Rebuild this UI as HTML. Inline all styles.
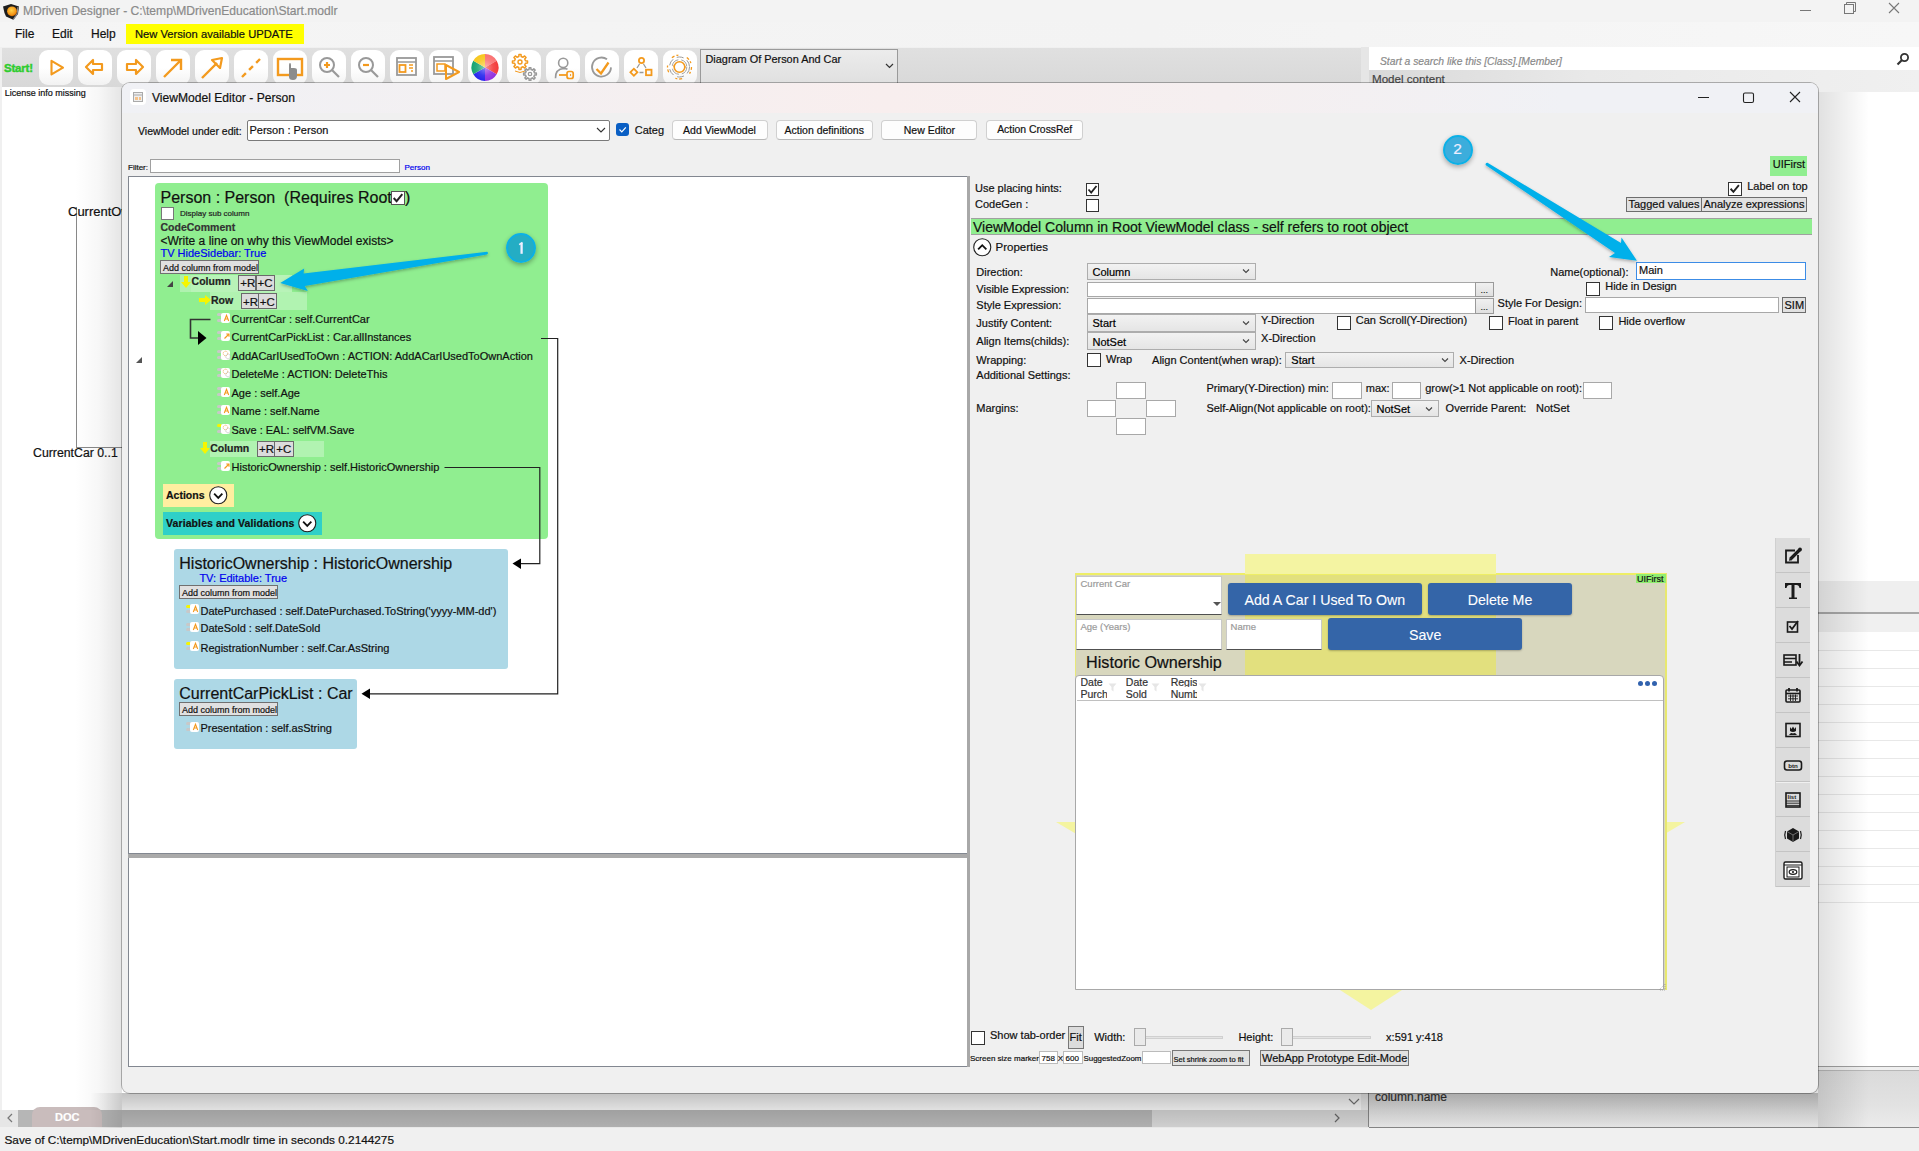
<!DOCTYPE html>
<html><head><meta charset="utf-8"><title>MDriven Designer</title>
<style>
html,body{margin:0;padding:0;}
body{width:1919px;height:1151px;position:relative;overflow:hidden;background:#f0f0f0;font-family:"Liberation Sans",sans-serif;}
.t{position:absolute;white-space:nowrap;line-height:1;font-family:"Liberation Sans",sans-serif;-webkit-text-stroke:0.2px currentColor;}
.r{position:absolute;}
svg.r{overflow:visible;}
</style></head><body>
<div class="r" style="left:0.0px;top:0.0px;width:1919.0px;height:22.0px;background:#f3f3f3;"></div>
<div class="r" style="left:0.0px;top:22.0px;width:1919.0px;height:25.0px;background:linear-gradient(90deg,#f5f5f5,#f3f3f3 60%,#f7f7f7);"></div>
<div class="r" style="left:2.0px;top:48.0px;width:1359.0px;height:39.0px;background:linear-gradient(#e0e0e0,#d8d8d8);"></div>
<div class="r" style="left:1361.0px;top:47.0px;width:8.0px;height:45.0px;background:#e6e6e6;"></div>
<div class="r" style="left:2.0px;top:87.0px;width:1359.0px;height:1023.0px;background:#fff;"></div>
<div class="r" style="left:1369.0px;top:70.0px;width:550.0px;height:22.0px;background:linear-gradient(90deg,#d9d9d9,#e9e9e9 40%,#f0f0f0);"></div>
<div class="r" style="left:1369.0px;top:92.0px;width:550.0px;height:974.0px;background:#fff;"></div>
<div class="r" style="left:1369.0px;top:47.0px;width:550.0px;height:23.0px;background:#fff;"></div>
<div class="t" style="left:1380.0px;top:56.7px;font-size:10.3px;color:#8a8a8a;font-style:italic;">Start a search like this [Class].[Member]</div>
<svg class="r" style="left:1896px;top:52px" width="14" height="14" viewBox="0 0 14 14"><circle cx="8.5" cy="5.5" r="3.6" fill="none" stroke="#333" stroke-width="1.8"/><path d="M6 8 L1.5 12.5" stroke="#333" stroke-width="2.2"/></svg>
<div class="t" style="left:1372.0px;top:73.4px;font-size:11.6px;color:#444;">Model content</div>
<div class="r" style="left:1818.0px;top:581.0px;width:101.0px;height:32.0px;background:#efefef;"></div>
<div class="r" style="left:1818.0px;top:612.0px;width:101.0px;height:2.0px;background:#a8a8a8;"></div>
<div class="r" style="left:1818.0px;top:614.0px;width:101.0px;height:18.0px;background:#f0f0f0;"></div>
<div class="r" style="left:1818.0px;top:650.0px;width:101.0px;height:1.0px;background:#e8e8e8;"></div>
<div class="r" style="left:1818.0px;top:668.0px;width:101.0px;height:1.0px;background:#e8e8e8;"></div>
<div class="r" style="left:1818.0px;top:686.0px;width:101.0px;height:1.0px;background:#e8e8e8;"></div>
<div class="r" style="left:1818.0px;top:704.0px;width:101.0px;height:1.0px;background:#e8e8e8;"></div>
<div class="r" style="left:1818.0px;top:722.0px;width:101.0px;height:1.0px;background:#e8e8e8;"></div>
<div class="r" style="left:1818.0px;top:740.0px;width:101.0px;height:1.0px;background:#e8e8e8;"></div>
<div class="r" style="left:1818.0px;top:758.0px;width:101.0px;height:1.0px;background:#e8e8e8;"></div>
<div class="r" style="left:1818.0px;top:776.0px;width:101.0px;height:1.0px;background:#e8e8e8;"></div>
<div class="r" style="left:1818.0px;top:794.0px;width:101.0px;height:1.0px;background:#e8e8e8;"></div>
<div class="r" style="left:1818.0px;top:812.0px;width:101.0px;height:1.0px;background:#e8e8e8;"></div>
<div class="r" style="left:1818.0px;top:830.0px;width:101.0px;height:1.0px;background:#e8e8e8;"></div>
<div class="r" style="left:1818.0px;top:848.0px;width:101.0px;height:1.0px;background:#e8e8e8;"></div>
<div class="r" style="left:1818.0px;top:866.0px;width:101.0px;height:1.0px;background:#e8e8e8;"></div>
<div class="r" style="left:1818.0px;top:884.0px;width:101.0px;height:1.0px;background:#e8e8e8;"></div>
<div class="r" style="left:1818.0px;top:902.0px;width:101.0px;height:1.0px;background:#e8e8e8;"></div>
<div class="r" style="left:1369.0px;top:1066.0px;width:550.0px;height:1.0px;background:#a0a0a0;"></div>
<div class="r" style="left:1369.0px;top:1070.0px;width:550.0px;height:1.0px;background:#b8b8b8;"></div>
<div class="r" style="left:1369.0px;top:1071.0px;width:550.0px;height:57.0px;background:linear-gradient(#dadada,#e2e2e2 60%,#ececec);"></div>
<div class="r" style="left:1368.0px;top:1071.0px;width:1.0px;height:57.0px;background:#888;"></div>
<div class="r" style="left:1369.0px;top:1127.0px;width:550.0px;height:1.0px;background:#888;"></div>
<div class="t" style="left:1375.0px;top:1091.4px;font-size:12px;color:#333;">column.name</div>
<div class="r" style="left:0.0px;top:1110.0px;width:1368.0px;height:17.0px;background:#d6d6d6;"></div>
<div class="r" style="left:0.0px;top:1110.0px;width:18.0px;height:17.0px;background:#e6e6e6;"></div>
<div class="r" style="left:18.0px;top:1110.0px;width:1134.0px;height:17.0px;background:#b6b6b6;"></div>
<svg class="r" style="left:6px;top:1113px" width="8" height="10"><path d="M6 1 L2 5 L6 9" fill="none" stroke="#777" stroke-width="1.2"/></svg>
<svg class="r" style="left:1333px;top:1113px" width="8" height="10"><path d="M2 1 L6 5 L2 9" fill="none" stroke="#666" stroke-width="1.2"/></svg>
<svg class="r" style="left:1348px;top:1098px" width="12" height="8"><path d="M1 1 L6 6 L11 1" fill="none" stroke="#777" stroke-width="1.2"/></svg>
<div class="r" style="left:32.0px;top:1107.0px;width:70.0px;height:20.0px;background:#c9bcbc;border-radius:8px 8px 0 0;"></div>
<div class="t" style="left:55.0px;top:1112.3px;font-size:11px;color:#fff;font-weight:bold;">DOC</div>
<div class="r" style="left:0.0px;top:1127.0px;width:1369.0px;height:24.0px;background:#f0f0f0;"></div>
<div class="r" style="left:1369.0px;top:1128.0px;width:550.0px;height:23.0px;background:#f0f0f0;"></div>
<div class="t" style="left:4.5px;top:1135.1px;font-size:11.8px;color:#111;">Save of C:\temp\MDrivenEducation\Start.modlr time in seconds 0.2144275</div>
<svg class="r" style="left:2px;top:2px" width="18" height="18" viewBox="0 0 18 18"><path d="M1 4.5 L9 2 L17 4.5 L16 12 L11.3 17.8 L4 14.5 L2.5 11 Z" fill="#1e1e1e"/><path d="M16 5 L15 12 L11.3 17.5" fill="none" stroke="#8a8a90" stroke-width="1.2"/><circle cx="10" cy="9.3" r="4.9" fill="url(#gball)"/><defs><radialGradient id="gball" cx="0.45" cy="0.4" r="0.6"><stop offset="0" stop-color="#ffd24a"/><stop offset="0.7" stop-color="#f59a1a"/><stop offset="1" stop-color="#d46a00"/></radialGradient></defs></svg>
<div class="t" style="left:23.0px;top:5.0px;font-size:12.1px;color:#8a8a8a;">MDriven Designer - C:\temp\MDrivenEducation\Start.modlr</div>
<svg class="r" style="left:1798px;top:1px" width="110" height="14"><path d="M2 9.5 H13" stroke="#777" stroke-width="1"/><rect x="46.5" y="3.5" width="9" height="9" fill="none" stroke="#777"/><path d="M48.5 3.5 V1.5 H57.5 V10.5 H55.5" fill="none" stroke="#777"/><path d="M91 2 L101 12 M101 2 L91 12" stroke="#777" stroke-width="1.1"/></svg>
<div class="t" style="left:15.0px;top:28.4px;font-size:12px;color:#111;">File</div>
<div class="t" style="left:52.0px;top:28.4px;font-size:12px;color:#111;">Edit</div>
<div class="t" style="left:91.0px;top:28.4px;font-size:12px;color:#111;">Help</div>
<div class="r" style="left:126.0px;top:24.0px;width:178.0px;height:20.0px;background:#ffff00;"></div>
<div class="t" style="left:135.0px;top:29.1px;font-size:11.2px;color:#111;">New Version available UPDATE</div>
<div class="t" style="left:4.0px;top:63.4px;font-size:11.5px;color:#2ecc2e;font-weight:bold;letter-spacing:-0.2px;-webkit-text-stroke:0.4px #2ecc2e;">Start!</div>
<div class="r" style="left:39.0px;top:50.0px;width:34.0px;height:35.0px;background:linear-gradient(#fff 50%,#f2f2f2);border-radius:9px;"></div>
<svg class="r" style="left:39px;top:50px" width="34" height="35" viewBox="0 0 34 35"><path d="M12.5 10.8 L24 17.6 L12.5 24.4 Z" fill="none" stroke="#f39a1e" stroke-width="2.1" stroke-linejoin="round"/></svg>
<div class="r" style="left:78.0px;top:50.0px;width:34.0px;height:35.0px;background:linear-gradient(#fff 50%,#f2f2f2);border-radius:9px;"></div>
<svg class="r" style="left:78px;top:50px" width="34" height="35" viewBox="0 0 34 35"><path d="M8 17 L15 10 V14 H24 V20 H15 V24 Z" fill="none" stroke="#f39a1e" stroke-width="2.2" stroke-linejoin="round"/></svg>
<div class="r" style="left:117.0px;top:50.0px;width:34.0px;height:35.0px;background:linear-gradient(#fff 50%,#f2f2f2);border-radius:9px;"></div>
<svg class="r" style="left:117px;top:50px" width="34" height="35" viewBox="0 0 34 35"><path d="M26 17 L19 10 V14 H10 V20 H19 V24 Z" fill="none" stroke="#f39a1e" stroke-width="2.2" stroke-linejoin="round"/></svg>
<div class="r" style="left:156.0px;top:50.0px;width:34.0px;height:35.0px;background:linear-gradient(#fff 50%,#f2f2f2);border-radius:9px;"></div>
<svg class="r" style="left:156px;top:50px" width="34" height="35" viewBox="0 0 34 35"><path d="M8 27 L24 11 M15 10 H25 V20" fill="none" stroke="#f39a1e" stroke-width="2.4"/></svg>
<div class="r" style="left:195.0px;top:50.0px;width:34.0px;height:35.0px;background:linear-gradient(#fff 50%,#f2f2f2);border-radius:9px;"></div>
<svg class="r" style="left:195px;top:50px" width="34" height="35" viewBox="0 0 34 35"><path d="M7 28 L22 13" stroke="#f39a1e" stroke-width="2.4"/><path d="M17 10 L27 8 L25 18 Z" fill="none" stroke="#f39a1e" stroke-width="2.2" stroke-linejoin="round"/></svg>
<div class="r" style="left:234.0px;top:50.0px;width:34.0px;height:35.0px;background:linear-gradient(#fff 50%,#f2f2f2);border-radius:9px;"></div>
<svg class="r" style="left:234px;top:50px" width="34" height="35" viewBox="0 0 34 35"><path d="M8 27 L26 9" stroke="#f39a1e" stroke-width="2.4" stroke-dasharray="5.5 4.5"/></svg>
<div class="r" style="left:273.0px;top:50.0px;width:34.0px;height:35.0px;background:linear-gradient(#fff 50%,#f2f2f2);border-radius:9px;"></div>
<svg class="r" style="left:273px;top:50px" width="34" height="35" viewBox="0 0 34 35"><rect x="5" y="9" width="24" height="16" fill="none" stroke="#f39a1e" stroke-width="2.4"/><path d="M16 15 V27 Q16 30 20 30 Q24 30 24 26 V20 Q24 18 21 18 H18 V15 Q18 13 17 13 Q16 13 16 15Z" fill="#8d8d8d"/></svg>
<div class="r" style="left:312.0px;top:50.0px;width:34.0px;height:35.0px;background:linear-gradient(#fff 50%,#f2f2f2);border-radius:9px;"></div>
<svg class="r" style="left:312px;top:50px" width="34" height="35" viewBox="0 0 34 35"><circle cx="15" cy="15" r="7" fill="none" stroke="#999" stroke-width="2"/><path d="M20 20 L27 27" stroke="#999" stroke-width="2.2"/><path d="M12 15 H18 M15 12 V18" stroke="#f39a1e" stroke-width="2.2"/></svg>
<div class="r" style="left:351.0px;top:50.0px;width:34.0px;height:35.0px;background:linear-gradient(#fff 50%,#f2f2f2);border-radius:9px;"></div>
<svg class="r" style="left:351px;top:50px" width="34" height="35" viewBox="0 0 34 35"><circle cx="15" cy="15" r="7" fill="none" stroke="#999" stroke-width="2"/><path d="M20 20 L27 27" stroke="#999" stroke-width="2.2"/><path d="M12 15 H18" stroke="#f39a1e" stroke-width="2.2"/></svg>
<div class="r" style="left:390.0px;top:50.0px;width:34.0px;height:35.0px;background:linear-gradient(#fff 50%,#f2f2f2);border-radius:9px;"></div>
<svg class="r" style="left:390px;top:50px" width="34" height="35" viewBox="0 0 34 35"><rect x="7" y="8" width="19" height="17" fill="none" stroke="#999" stroke-width="1.8"/><path d="M7 12 H26" stroke="#999" stroke-width="1.5"/><rect x="9.5" y="15" width="6" height="7" fill="none" stroke="#f39a1e" stroke-width="1.8"/><path d="M19 15 H23 M19 18 H23 M21 21 H23" stroke="#f39a1e" stroke-width="1.5"/></svg>
<div class="r" style="left:429.0px;top:50.0px;width:34.0px;height:35.0px;background:linear-gradient(#fff 50%,#f2f2f2);border-radius:9px;"></div>
<svg class="r" style="left:429px;top:50px" width="34" height="35" viewBox="0 0 34 35"><rect x="5" y="7" width="19" height="17" fill="none" stroke="#999" stroke-width="1.8"/><path d="M5 11 H24" stroke="#999" stroke-width="1.5"/><rect x="8" y="14" width="8" height="7" fill="none" stroke="#f39a1e" stroke-width="1.5"/><path d="M17 15 L30 22 L17 29 Z" fill="none" stroke="#f39a1e" stroke-width="2" stroke-linejoin="round"/></svg>
<div class="r" style="left:468.0px;top:50.0px;width:34.0px;height:35.0px;background:linear-gradient(#fff 50%,#f2f2f2);border-radius:9px;"></div>
<svg class="r" style="left:468px;top:50px" width="34" height="35" viewBox="0 0 34 35"><defs><radialGradient id="wheelc"><stop offset="0" stop-color="#fff" stop-opacity="0.45"/><stop offset="0.6" stop-color="#fff" stop-opacity="0.1"/><stop offset="1" stop-color="#fff" stop-opacity="0"/></radialGradient></defs><g transform="translate(17 17.5)"><path d="M0 0 L0.00 -13.50 A13.5 13.5 0 0 1 11.69 -6.75 Z" fill="#fa7272"/><path d="M0 0 L11.69 -6.75 A13.5 13.5 0 0 1 11.69 6.75 Z" fill="#f33a3a"/><path d="M0 0 L11.69 6.75 A13.5 13.5 0 0 1 0.00 13.50 Z" fill="#8f2fe0"/><path d="M0 0 L0.00 13.50 A13.5 13.5 0 0 1 -11.69 6.75 Z" fill="#2424ee"/><path d="M0 0 L-11.69 6.75 A13.5 13.5 0 0 1 -11.69 -6.75 Z" fill="#17a370"/><path d="M0 0 L-11.69 -6.75 A13.5 13.5 0 0 1 -0.00 -13.50 Z" fill="#f7c71e"/><circle r="13.5" fill="url(#wheelc)"/></g></svg>
<div class="r" style="left:507.0px;top:50.0px;width:34.0px;height:35.0px;background:linear-gradient(#fff 50%,#f2f2f2);border-radius:9px;"></div>
<svg class="r" style="left:507px;top:50px" width="34" height="35" viewBox="0 0 34 35"><path d="M18.47 10.80 L20.53 10.96 L20.53 13.04 L18.47 13.20 L17.72 15.02 L19.06 16.59 L17.59 18.06 L16.02 16.72 L14.20 17.47 L14.04 19.53 L11.96 19.53 L11.80 17.47 L9.98 16.72 L8.41 18.06 L6.94 16.59 L8.28 15.02 L7.53 13.20 L5.47 13.04 L5.47 10.96 L7.53 10.80 L8.28 8.98 L6.94 7.41 L8.41 5.94 L9.98 7.28 L11.80 6.53 L11.96 4.47 L14.04 4.47 L14.20 6.53 L16.02 7.28 L17.59 5.94 L19.06 7.41 L17.72 8.98 Z" fill="none" stroke="#f39a1e" stroke-width="1.5" stroke-linejoin="round"/><circle cx="13" cy="12" r="2" fill="none" stroke="#f39a1e" stroke-width="1.4"/><path d="M8 21 Q13 24 18 21" fill="none" stroke="#f39a1e" stroke-width="1"/><path d="M27.49 23.01 L29.34 23.12 L29.34 24.88 L27.49 24.99 L26.87 26.48 L28.10 27.86 L26.86 29.10 L25.48 27.87 L23.99 28.49 L23.88 30.34 L22.12 30.34 L22.01 28.49 L20.52 27.87 L19.14 29.10 L17.90 27.86 L19.13 26.48 L18.51 24.99 L16.66 24.88 L16.66 23.12 L18.51 23.01 L19.13 21.52 L17.90 20.14 L19.14 18.90 L20.52 20.13 L22.01 19.51 L22.12 17.66 L23.88 17.66 L23.99 19.51 L25.48 20.13 L26.86 18.90 L28.10 20.14 L26.87 21.52 Z" fill="#fff" stroke="#999" stroke-width="1.5" stroke-linejoin="round"/><circle cx="23" cy="24" r="1.7" fill="none" stroke="#999" stroke-width="1.3"/></svg>
<div class="r" style="left:546.0px;top:50.0px;width:34.0px;height:35.0px;background:linear-gradient(#fff 50%,#f2f2f2);border-radius:9px;"></div>
<svg class="r" style="left:546px;top:50px" width="34" height="35" viewBox="0 0 34 35"><circle cx="17.2" cy="12.9" r="4.6" fill="none" stroke="#999" stroke-width="1.6"/><path d="M9.5 28.3 Q9 19 18 18.5 Q20 18.5 21.5 19.3" fill="none" stroke="#999" stroke-width="1.6"/><path d="M13 25 H21" stroke="#f39a1e" stroke-width="1.8"/><rect x="21" y="21.5" width="6.2" height="7" rx="2" fill="none" stroke="#f39a1e" stroke-width="1.7"/><path d="M24.6 24 V26" stroke="#f39a1e" stroke-width="1"/></svg>
<div class="r" style="left:585.0px;top:50.0px;width:34.0px;height:35.0px;background:linear-gradient(#fff 50%,#f2f2f2);border-radius:9px;"></div>
<svg class="r" style="left:585px;top:50px" width="34" height="35" viewBox="0 0 34 35"><path d="M22 9.3 A9.5 9.5 0 1 0 26 17.4" fill="none" stroke="#999" stroke-width="1.8"/><path d="M11.5 19 L16 23.5 L23.5 12.5" fill="none" stroke="#f39a1e" stroke-width="2.3"/></svg>
<div class="r" style="left:624.0px;top:50.0px;width:34.0px;height:35.0px;background:linear-gradient(#fff 50%,#f2f2f2);border-radius:9px;"></div>
<svg class="r" style="left:624px;top:50px" width="34" height="35" viewBox="0 0 34 35"><circle cx="17.5" cy="10.5" r="2.6" fill="none" stroke="#f39a1e" stroke-width="1.8"/><rect x="7.4" y="19.7" width="5" height="5" fill="none" stroke="#f39a1e" stroke-width="1.8" transform="rotate(45 9.9 22.2)"/><rect x="22" y="19.7" width="5.5" height="5.5" fill="none" stroke="#f39a1e" stroke-width="1.8"/><path d="M15.5 14 L13 18 M19.5 14 L22 18 M15.5 22.5 H19.5" stroke="#999" stroke-width="1.3"/></svg>
<div class="r" style="left:663.0px;top:50.0px;width:34.0px;height:35.0px;background:linear-gradient(#fff 50%,#f2f2f2);border-radius:9px;"></div>
<svg class="r" style="left:663px;top:50px" width="34" height="35" viewBox="0 0 34 35"><circle cx="16.5" cy="17" r="5.3" fill="none" stroke="#f39a1e" stroke-width="1.6"/><circle cx="16.5" cy="17" r="7.3" fill="none" stroke="#999" stroke-width="0.9" stroke-dasharray="9 3"/><circle cx="16.5" cy="17" r="10" fill="none" stroke="#999" stroke-width="1" stroke-dasharray="7 4"/><circle cx="16.5" cy="17" r="12" fill="none" stroke="#f39a1e" stroke-width="1.3" stroke-dasharray="3 2 2 9"/><path d="M10 16 H11.3 M22 16 V18" stroke="#f39a1e" stroke-width="1"/></svg>
<div class="r" style="left:699.5px;top:48.5px;width:198.5px;height:34.5px;background:linear-gradient(#ececec,#e0e0e0);border:1px solid #9a9a9a;border-bottom:none;box-sizing:border-box;"></div>
<div class="t" style="left:705.5px;top:54.4px;font-size:10.9px;color:#111;">Diagram Of Person And Car</div>
<svg class="r" style="left:885px;top:63px" width="9" height="6"><path d="M1 1 L4.5 4.5 L8 1" fill="none" stroke="#333" stroke-width="1.2"/></svg>
<div class="t" style="left:4.8px;top:89.3px;font-size:9px;color:#111;">License info missing</div>
<div class="r" style="left:76.0px;top:207.0px;width:1.0px;height:240.0px;background:#888;"></div>
<div class="r" style="left:76.0px;top:446.5px;width:46.0px;height:1.0px;background:#888;"></div>
<div class="t" style="left:68.0px;top:205.1px;font-size:13px;color:#111;">CurrentOwner</div>
<div class="t" style="left:33.0px;top:446.7px;font-size:12.3px;color:#111;">CurrentCar 0..1</div>
<div class="r" style="left:75.0px;top:87.0px;width:47.0px;height:1023.0px;background:linear-gradient(90deg,rgba(0,0,0,0),rgba(0,0,0,0.03) 50%,rgba(0,0,0,0.10));"></div>
<div class="r" style="left:90.0px;top:1093.0px;width:32.0px;height:35.0px;background:linear-gradient(90deg,rgba(0,0,0,0),rgba(0,0,0,0.12));"></div>
<div class="r" style="left:1818.0px;top:92.0px;width:51.0px;height:1036.0px;background:linear-gradient(90deg,rgba(0,0,0,0.12),rgba(0,0,0,0));"></div>
<div class="r" style="left:122.0px;top:1093.0px;width:1696.0px;height:35.0px;background:linear-gradient(rgba(0,0,0,0.24),rgba(0,0,0,0.12) 48%,rgba(0,0,0,0.03));"></div>
<div class="r" style="left:122px;top:83px;width:1696px;height:1010px;background:#f0f0f0;border-radius:8px;box-shadow:0 0 0 1px rgba(0,0,0,0.28);overflow:hidden"><div class="r" style="left:0;top:0;width:1696px;height:30px;background:linear-gradient(90deg,#f0f1f5 0%,#f3f0f2 20%,#f8eeee 45%,#f5eff0 65%,#f0f1f5 85%);"></div></div>
<div class="r" style="left:130px;top:89px;width:16px;height:16px;background:#fff;border-radius:4px;"></div>
<svg class="r" style="left:133px;top:92px" width="10" height="10"><rect x="0.5" y="0.5" width="9" height="9" fill="#eee" stroke="#aaa"/><path d="M0.5 3 H9.5" stroke="#aaa"/><rect x="2" y="5" width="3" height="3" fill="#f5c28a"/><rect x="6" y="5" width="2" height="3" fill="#f5c28a"/></svg>
<div class="t" style="left:152.0px;top:92.0px;font-size:12.1px;color:#111;">ViewModel Editor - Person</div>
<svg class="r" style="left:1690px;top:88px" width="120" height="18"><path d="M8 9.5 H19" stroke="#222" stroke-width="1"/><rect x="53.5" y="5" width="10" height="9.5" rx="1.5" fill="none" stroke="#222" stroke-width="1.1"/><path d="M100 4 L110 14 M110 4 L100 14" stroke="#222" stroke-width="1.1"/></svg>
<div class="t" style="left:138.0px;top:125.7px;font-size:10.5px;color:#111;">ViewModel under edit:</div>
<div class="r" style="left:247.0px;top:120.0px;width:363.0px;height:20.5px;background:#fff;border:1px solid #7a7a7a;border-radius:2px;box-sizing:border-box;"></div>
<div class="t" style="left:249.5px;top:125.3px;font-size:11px;color:#111;">Person : Person</div>
<svg class="r" style="left:596px;top:127px" width="10" height="7"><path d="M1 1 L5 5 L9 1" fill="none" stroke="#333" stroke-width="1.1"/></svg>
<div class="r" style="left:616.0px;top:123.0px;width:13.0px;height:13.0px;background:#0a5fc4;border-radius:3px;"></div>
<svg class="r" style="left:616px;top:123px" width="13" height="13"><path d="M3.5 6.5 L5.8 8.8 L9.8 4.3" fill="none" stroke="#fff" stroke-width="1.2"/></svg>
<div class="t" style="left:634.7px;top:125.0px;font-size:11px;color:#111;">Categ</div>
<div class="r" style="left:671.5px;top:119.5px;width:96.0px;height:20.3px;background:#fdfdfd;border:1px solid #d0d0d0;border-bottom-color:#b8b8b8;border-radius:4px;box-sizing:border-box;"></div>
<div class="t" style="left:671.5px;top:124.8px;width:96.0px;text-align:center;font-size:10.5px;color:#111">Add ViewModel</div>
<div class="r" style="left:776.0px;top:119.5px;width:96.5px;height:20.3px;background:#fdfdfd;border:1px solid #d0d0d0;border-bottom-color:#b8b8b8;border-radius:4px;box-sizing:border-box;"></div>
<div class="t" style="left:776px;top:124.8px;width:96.5px;text-align:center;font-size:10.5px;color:#111">Action definitions</div>
<div class="r" style="left:881.4px;top:119.5px;width:96.1px;height:20.3px;background:#fdfdfd;border:1px solid #d0d0d0;border-bottom-color:#b8b8b8;border-radius:4px;box-sizing:border-box;"></div>
<div class="t" style="left:881.4px;top:124.8px;width:96.10000000000002px;text-align:center;font-size:10.5px;color:#111">New Editor</div>
<div class="r" style="left:986.4px;top:119.5px;width:96.6px;height:20.3px;background:#fdfdfd;border:1px solid #d0d0d0;border-bottom-color:#b8b8b8;border-radius:4px;box-sizing:border-box;"></div>
<div class="t" style="left:986.4px;top:124.9px;width:96.60000000000002px;text-align:center;font-size:10.4px;color:#111">Action CrossRef</div>
<div class="t" style="left:128.0px;top:163.6px;font-size:8px;color:#111;">Filter:</div>
<div class="r" style="left:150.0px;top:159.0px;width:250.0px;height:14.0px;background:#fff;border:1px solid #a0a0a0;box-sizing:border-box;"></div>
<div class="t" style="left:404.5px;top:163.6px;font-size:8px;color:#0000ee;">Person</div>
<div class="r" style="left:128.0px;top:176.0px;width:839.0px;height:678.0px;background:#fff;border:1px solid #828790;border-right:none;box-sizing:border-box;"></div>
<div class="r" style="left:128.0px;top:854.0px;width:839.0px;height:4.0px;background:#aaaaaa;"></div>
<div class="r" style="left:128.0px;top:858.0px;width:839.0px;height:209.0px;background:#fff;border:1px solid #828790;border-right:none;border-top:none;box-sizing:border-box;"></div>
<div class="r" style="left:967.0px;top:176.0px;width:3.0px;height:891.0px;background:#a8a8a8;"></div>
<svg class="r" style="left:135px;top:356px" width="8" height="8"><path d="M7 1 L7 7 L1 7 Z" fill="#555"/></svg>
<div class="r" style="left:155.0px;top:183.0px;width:392.5px;height:356.0px;background:#90ee90;border-radius:4px;"></div>
<div class="t" style="left:160.5px;top:189.7px;font-size:16px;color:#111;white-space:pre;">Person : Person  (Requires Root</div>
<div class="r" style="left:390.5px;top:191.2px;width:14.0px;height:14.0px;border:1px solid #555;background:#fff;box-sizing:border-box;"></div>
<svg class="r" style="left:390.5px;top:191.2px" width="14" height="14" viewBox="0 0 13 13"><path d="M2.5 6.5 L5.2 9.5 L10.5 3" fill="none" stroke="#222" stroke-width="1.8"/></svg>
<div class="t" style="left:405.0px;top:189.7px;font-size:16px;color:#111;">)</div>
<div class="r" style="left:161.0px;top:207.3px;width:13.0px;height:13.0px;border:1px solid #777;background:#fff;box-sizing:border-box;"></div>
<div class="t" style="left:180.0px;top:210.3px;font-size:8px;color:#222;">Display sub column</div>
<div class="t" style="left:160.5px;top:222.2px;font-size:10.5px;color:#333;font-weight:bold;">CodeComment</div>
<div class="t" style="left:160.5px;top:235.4px;font-size:12px;color:#111;">&lt;Write a line on why this ViewModel exists&gt;</div>
<div class="t" style="left:160.5px;top:247.9px;font-size:11px;color:#0000ee;">TV HideSidebar: True</div>
<div class="r" style="left:160.0px;top:260.0px;width:99.0px;height:13.5px;background:#e0e0e0;border:1px solid #707070;box-sizing:border-box;"></div>
<div class="t" style="left:163.0px;top:263.7px;font-size:9px;color:#111;">Add column from model</div>
<div class="r" style="left:180.0px;top:275.2px;width:112.0px;height:17.2px;background:rgba(255,255,255,0.28);"></div>
<div class="r" style="left:191.0px;top:275.2px;width:101.0px;height:17.2px;background:rgba(255,255,255,0.12);"></div>
<svg class="r" style="left:166px;top:280px" width="8" height="8"><path d="M7 1 L7 7 L1 7 Z" fill="#444"/></svg>
<svg class="r" style="left:181px;top:276px" width="10" height="13"><path d="M3 0 H7 V6 H10 L5 12 L0 6 H3 Z" fill="#f5f500"/></svg>
<div class="t" style="left:191.6px;top:276.0px;font-size:10.5px;color:#222;font-weight:bold;">Column</div>
<div class="r" style="left:238.3px;top:275.2px;width:18.2px;height:15.4px;background:#dcdcdc;border:1px solid #6a6a6a;box-sizing:border-box;"></div>
<div class="r" style="left:255.5px;top:275.2px;width:19.2px;height:15.4px;background:#dcdcdc;border:1px solid #6a6a6a;box-sizing:border-box;"></div>
<div class="t" style="left:240.3px;top:278.0px;font-size:11.5px;color:#111;">+R</div>
<div class="t" style="left:257.5px;top:278.0px;font-size:11.5px;color:#111;">+C</div>
<div class="r" style="left:209.6px;top:292.4px;width:97.4px;height:17.2px;background:rgba(255,255,255,0.3);"></div>
<svg class="r" style="left:199px;top:295px" width="12" height="10"><path d="M0 3 H6 V0 L12 5 L6 10 V7 H0 Z" fill="#f5f500"/></svg>
<div class="t" style="left:210.9px;top:295.0px;font-size:10.5px;color:#222;font-weight:bold;">Row</div>
<div class="r" style="left:241.0px;top:293.3px;width:17.8px;height:15.9px;background:#dcdcdc;border:1px solid #6a6a6a;box-sizing:border-box;"></div>
<div class="r" style="left:257.8px;top:293.3px;width:18.8px;height:15.9px;background:#dcdcdc;border:1px solid #6a6a6a;box-sizing:border-box;"></div>
<div class="t" style="left:243.0px;top:296.6px;font-size:11.5px;color:#111;">+R</div>
<div class="t" style="left:259.8px;top:296.6px;font-size:11.5px;color:#111;">+C</div>
<div class="r" style="left:216.5px;top:313.4px;width:5.0px;height:3.0px;background:#c8c8c8;border-radius:1.5px;"></div>
<div class="r" style="left:216.5px;top:318.9px;width:5.0px;height:3.0px;background:#c8c8c8;border-radius:1.5px;"></div>
<div class="r" style="left:221.3px;top:312.9px;width:9.2px;height:10.0px;background:#fff;border-radius:2px;"></div>
<svg class="r" style="left:221.5px;top:312.9px" width="9" height="10"><path d="M2.3 8 L4.5 2.2 L6.7 8 M3 6 H6" fill="none" stroke="#f39a1e" stroke-width="1.1"/></svg>
<div class="t" style="left:231.5px;top:314.2px;font-size:11px;color:#111;">CurrentCar : self.CurrentCar</div>
<div class="r" style="left:216.5px;top:331.3px;width:5.0px;height:3.0px;background:#c8c8c8;border-radius:1.5px;"></div>
<div class="r" style="left:216.5px;top:336.8px;width:5.0px;height:3.0px;background:#c8c8c8;border-radius:1.5px;"></div>
<div class="r" style="left:221.3px;top:330.8px;width:9.2px;height:10.0px;background:#fff;border-radius:2px;"></div>
<svg class="r" style="left:221.5px;top:330.8px" width="9" height="10"><path d="M2.5 7.5 L6.5 3.5 M4.3 3 H7 V5.7" fill="none" stroke="#f39a1e" stroke-width="1.1"/></svg>
<div class="t" style="left:231.5px;top:332.1px;font-size:11px;color:#111;">CurrentCarPickList : Car.allInstances</div>
<div class="r" style="left:216.5px;top:350.1px;width:5.0px;height:3.0px;background:#c8c8c8;border-radius:1.5px;"></div>
<div class="r" style="left:216.5px;top:355.6px;width:5.0px;height:3.0px;background:#c8c8c8;border-radius:1.5px;"></div>
<div class="r" style="left:221.3px;top:349.6px;width:9.2px;height:10.0px;background:#fff;border-radius:2px;"></div>
<svg class="r" style="left:221.5px;top:349.6px" width="9" height="10"><circle cx="3.5" cy="3.5" r="2.3" fill="none" stroke="#f3b060" stroke-width="1" stroke-dasharray="1 0.8"/><circle cx="6" cy="6.5" r="2.3" fill="none" stroke="#bbb" stroke-width="1" stroke-dasharray="1 0.8"/></svg>
<div class="t" style="left:231.5px;top:350.9px;font-size:11px;color:#111;">AddACarIUsedToOwn : ACTION: AddACarIUsedToOwnAction</div>
<div class="r" style="left:216.5px;top:368.2px;width:5.0px;height:3.0px;background:#c8c8c8;border-radius:1.5px;"></div>
<div class="r" style="left:216.5px;top:373.7px;width:5.0px;height:3.0px;background:#c8c8c8;border-radius:1.5px;"></div>
<div class="r" style="left:221.3px;top:367.7px;width:9.2px;height:10.0px;background:#fff;border-radius:2px;"></div>
<svg class="r" style="left:221.5px;top:367.7px" width="9" height="10"><circle cx="3.5" cy="3.5" r="2.3" fill="none" stroke="#f3b060" stroke-width="1" stroke-dasharray="1 0.8"/><circle cx="6" cy="6.5" r="2.3" fill="none" stroke="#bbb" stroke-width="1" stroke-dasharray="1 0.8"/></svg>
<div class="t" style="left:231.5px;top:369.0px;font-size:11px;color:#111;">DeleteMe : ACTION: DeleteThis</div>
<div class="r" style="left:216.5px;top:387.0px;width:5.0px;height:3.0px;background:#c8c8c8;border-radius:1.5px;"></div>
<div class="r" style="left:216.5px;top:392.5px;width:5.0px;height:3.0px;background:#c8c8c8;border-radius:1.5px;"></div>
<div class="r" style="left:221.3px;top:386.5px;width:9.2px;height:10.0px;background:#fff;border-radius:2px;"></div>
<svg class="r" style="left:221.5px;top:386.5px" width="9" height="10"><path d="M2.3 8 L4.5 2.2 L6.7 8 M3 6 H6" fill="none" stroke="#f39a1e" stroke-width="1.1"/></svg>
<div class="t" style="left:231.5px;top:387.8px;font-size:11px;color:#111;">Age : self.Age</div>
<div class="r" style="left:216.5px;top:405.3px;width:5.0px;height:3.0px;background:#c8c8c8;border-radius:1.5px;"></div>
<div class="r" style="left:216.5px;top:410.8px;width:5.0px;height:3.0px;background:#c8c8c8;border-radius:1.5px;"></div>
<div class="r" style="left:221.3px;top:404.8px;width:9.2px;height:10.0px;background:#fff;border-radius:2px;"></div>
<svg class="r" style="left:221.5px;top:404.8px" width="9" height="10"><path d="M2.3 8 L4.5 2.2 L6.7 8 M3 6 H6" fill="none" stroke="#f39a1e" stroke-width="1.1"/></svg>
<div class="t" style="left:231.5px;top:406.1px;font-size:11px;color:#111;">Name : self.Name</div>
<div class="r" style="left:216.5px;top:424.0px;width:5.0px;height:3.0px;background:#f5f500;border-radius:1.5px;"></div>
<div class="r" style="left:216.5px;top:429.5px;width:5.0px;height:3.0px;background:#c8c8c8;border-radius:1.5px;"></div>
<div class="r" style="left:221.3px;top:423.5px;width:9.2px;height:10.0px;background:#fff;border-radius:2px;"></div>
<svg class="r" style="left:221.5px;top:423.5px" width="9" height="10"><circle cx="3.5" cy="3.5" r="2.3" fill="none" stroke="#f3b060" stroke-width="1" stroke-dasharray="1 0.8"/><circle cx="6" cy="6.5" r="2.3" fill="none" stroke="#bbb" stroke-width="1" stroke-dasharray="1 0.8"/></svg>
<div class="t" style="left:231.5px;top:424.8px;font-size:11px;color:#111;">Save : EAL: selfVM.Save</div>
<div class="r" style="left:210.0px;top:441.3px;width:113.8px;height:15.7px;background:rgba(255,255,255,0.3);"></div>
<svg class="r" style="left:200px;top:442px" width="10" height="13"><path d="M3 0 H7 V6 H10 L5 12 L0 6 H3 Z" fill="#f5f500"/></svg>
<div class="t" style="left:210.2px;top:442.6px;font-size:10.5px;color:#222;font-weight:bold;">Column</div>
<div class="r" style="left:257.0px;top:441.3px;width:18.3px;height:15.3px;background:#dcdcdc;border:1px solid #6a6a6a;box-sizing:border-box;"></div>
<div class="r" style="left:274.3px;top:441.3px;width:19.3px;height:15.3px;background:#dcdcdc;border:1px solid #6a6a6a;box-sizing:border-box;"></div>
<div class="t" style="left:259.0px;top:444.0px;font-size:11.5px;color:#111;">+R</div>
<div class="t" style="left:276.3px;top:444.0px;font-size:11.5px;color:#111;">+C</div>
<div class="r" style="left:216.5px;top:461.5px;width:5.0px;height:3.0px;background:#c8c8c8;border-radius:1.5px;"></div>
<div class="r" style="left:216.5px;top:467.0px;width:5.0px;height:3.0px;background:#c8c8c8;border-radius:1.5px;"></div>
<div class="r" style="left:221.3px;top:461.0px;width:9.2px;height:10.0px;background:#fff;border-radius:2px;"></div>
<svg class="r" style="left:221.5px;top:461px" width="9" height="10"><path d="M2.5 7.5 L6.5 3.5 M4.3 3 H7 V5.7" fill="none" stroke="#f39a1e" stroke-width="1.1"/></svg>
<div class="t" style="left:231.5px;top:462.3px;font-size:11px;color:#111;">HistoricOwnership : self.HistoricOwnership</div>
<div class="r" style="left:163.0px;top:484.2px;width:70.8px;height:22.8px;background:#ffeea0;"></div>
<div class="t" style="left:166.0px;top:490.3px;font-size:10.5px;color:#111;font-weight:bold;">Actions</div>
<svg class="r" style="left:208.8px;top:486.3px" width="18.5" height="18.5" viewBox="0 0 18 18"><circle cx="9" cy="9" r="8.3" fill="#fff" stroke="#222" stroke-width="1.1"/><path d="M5 7.5 L9 11.5 L13 7.5" fill="none" stroke="#111" stroke-width="1.8"/></svg>
<div class="r" style="left:163.0px;top:512.1px;width:159.0px;height:22.6px;background:#2fd0c8;"></div>
<div class="t" style="left:166.0px;top:518.4px;font-size:10.5px;color:#111;font-weight:bold;letter-spacing:0.1px;">Variables and Validations</div>
<svg class="r" style="left:297.8px;top:514.2px" width="18.5" height="18.5" viewBox="0 0 18 18"><circle cx="9" cy="9" r="8.3" fill="#fff" stroke="#222" stroke-width="1.1"/><path d="M5 7.5 L9 11.5 L13 7.5" fill="none" stroke="#111" stroke-width="1.8"/></svg>
<svg class="r" style="left:0;top:0" width="1919" height="1151"><path d="M210.5 319.5 H190.5 V338 H199" fill="none" stroke="#333" stroke-width="1.6"/><path d="M198 331 L206.5 338 L198 345 Z" fill="#000"/><path d="M541 338.5 H557.7 V693.8 H368" fill="none" stroke="#222" stroke-width="1.2"/><path d="M361.5 693.8 L370 688.5 L370 699 Z" fill="#000"/><path d="M444.5 467.5 H539.8 V563.6 H520" fill="none" stroke="#222" stroke-width="1.2"/><path d="M512.5 563.6 L521 558.5 L521 569 Z" fill="#000"/></svg>
<div class="r" style="left:174.2px;top:549.2px;width:333.8px;height:119.5px;background:#add8e6;border-radius:3px;"></div>
<div class="t" style="left:179.3px;top:555.6px;font-size:16px;color:#111;">HistoricOwnership : HistoricOwnership</div>
<div class="t" style="left:199.4px;top:573.3px;font-size:11px;color:#0000ee;">TV: Editable: True</div>
<div class="r" style="left:179.0px;top:585.0px;width:99.0px;height:13.5px;background:#e0e0e0;border:1px solid #707070;box-sizing:border-box;"></div>
<div class="t" style="left:182.0px;top:588.7px;font-size:9px;color:#111;">Add column from model</div>
<div class="r" style="left:185.5px;top:604.9px;width:5.0px;height:3.0px;background:#f5f500;border-radius:1.5px;"></div>
<div class="r" style="left:185.5px;top:610.4px;width:5.0px;height:3.0px;background:#c8c8c8;border-radius:1.5px;"></div>
<div class="r" style="left:190.3px;top:604.4px;width:9.2px;height:10.0px;background:#fff;border-radius:2px;"></div>
<svg class="r" style="left:190.5px;top:604.4px" width="9" height="10"><path d="M2.3 8 L4.5 2.2 L6.7 8 M3 6 H6" fill="none" stroke="#f39a1e" stroke-width="1.1"/></svg>
<div class="t" style="left:200.5px;top:605.7px;font-size:11px;color:#111;">DatePurchased : self.DatePurchased.ToString('yyyy-MM-dd')</div>
<div class="r" style="left:185.5px;top:622.5px;width:5.0px;height:3.0px;background:#c8c8c8;border-radius:1.5px;"></div>
<div class="r" style="left:185.5px;top:628.0px;width:5.0px;height:3.0px;background:#c8c8c8;border-radius:1.5px;"></div>
<div class="r" style="left:190.3px;top:622.0px;width:9.2px;height:10.0px;background:#fff;border-radius:2px;"></div>
<svg class="r" style="left:190.5px;top:622px" width="9" height="10"><path d="M2.3 8 L4.5 2.2 L6.7 8 M3 6 H6" fill="none" stroke="#f39a1e" stroke-width="1.1"/></svg>
<div class="t" style="left:200.5px;top:623.3px;font-size:11px;color:#111;">DateSold : self.DateSold</div>
<div class="r" style="left:185.5px;top:641.7px;width:5.0px;height:3.0px;background:#f5f500;border-radius:1.5px;"></div>
<div class="r" style="left:185.5px;top:647.2px;width:5.0px;height:3.0px;background:#c8c8c8;border-radius:1.5px;"></div>
<div class="r" style="left:190.3px;top:641.2px;width:9.2px;height:10.0px;background:#fff;border-radius:2px;"></div>
<svg class="r" style="left:190.5px;top:641.2px" width="9" height="10"><path d="M2.3 8 L4.5 2.2 L6.7 8 M3 6 H6" fill="none" stroke="#f39a1e" stroke-width="1.1"/></svg>
<div class="t" style="left:200.5px;top:642.5px;font-size:11px;color:#111;">RegistrationNumber : self.Car.AsString</div>
<div class="r" style="left:174.2px;top:679.0px;width:182.8px;height:70.0px;background:#add8e6;border-radius:3px;"></div>
<div class="t" style="left:179.3px;top:685.8px;font-size:16px;color:#111;">CurrentCarPickList : Car</div>
<div class="r" style="left:179.0px;top:702.4px;width:99.0px;height:13.5px;background:#e0e0e0;border:1px solid #707070;box-sizing:border-box;"></div>
<div class="t" style="left:182.0px;top:706.1px;font-size:9px;color:#111;">Add column from model</div>
<div class="r" style="left:185.5px;top:722.0px;width:5.0px;height:3.0px;background:#c8c8c8;border-radius:1.5px;"></div>
<div class="r" style="left:185.5px;top:727.5px;width:5.0px;height:3.0px;background:#c8c8c8;border-radius:1.5px;"></div>
<div class="r" style="left:190.3px;top:721.5px;width:9.2px;height:10.0px;background:#fff;border-radius:2px;"></div>
<svg class="r" style="left:190.5px;top:721.5px" width="9" height="10"><path d="M2.3 8 L4.5 2.2 L6.7 8 M3 6 H6" fill="none" stroke="#f39a1e" stroke-width="1.1"/></svg>
<div class="t" style="left:200.5px;top:722.8px;font-size:11px;color:#111;">Presentation : self.asString</div>
<div class="t" style="left:975.0px;top:183.1px;font-size:11px;color:#111;">Use placing hints:</div>
<div class="r" style="left:1086.0px;top:182.5px;width:13.0px;height:13.0px;border:1px solid #333;background:#fff;box-sizing:border-box;"></div>
<svg class="r" style="left:1086px;top:182.5px" width="13" height="13" viewBox="0 0 13 13"><path d="M2.5 6.5 L5.2 9.5 L10.5 3" fill="none" stroke="#222" stroke-width="1.8"/></svg>
<div class="t" style="left:975.0px;top:198.8px;font-size:11px;color:#111;">CodeGen :</div>
<div class="r" style="left:1086.0px;top:198.5px;width:13.0px;height:13.0px;border:1px solid #333;background:#fff;box-sizing:border-box;"></div>
<div class="r" style="left:1770.3px;top:156.3px;width:36.7px;height:19.3px;background:#90ee90;"></div>
<div class="t" style="left:1772.8px;top:159.1px;font-size:11px;color:#111;">UIFirst</div>
<div class="r" style="left:1728.2px;top:182.2px;width:13.5px;height:13.5px;border:1px solid #333;background:#fff;box-sizing:border-box;"></div>
<svg class="r" style="left:1728.2px;top:182.2px" width="13.5" height="13.5" viewBox="0 0 13 13"><path d="M2.5 6.5 L5.2 9.5 L10.5 3" fill="none" stroke="#222" stroke-width="1.8"/></svg>
<div class="t" style="left:1747.2px;top:180.9px;font-size:11px;color:#111;">Label on top</div>
<div class="r" style="left:1626.2px;top:196.6px;width:75.8px;height:15.8px;background:#e1e1e1;border:1px solid #6d6d6d;box-sizing:border-box;"></div>
<div class="r" style="left:1701.0px;top:196.6px;width:105.6px;height:15.8px;background:#e1e1e1;border:1px solid #6d6d6d;box-sizing:border-box;"></div>
<div class="t" style="left:1628.5px;top:199.1px;font-size:11px;color:#111;">Tagged values</div>
<div class="t" style="left:1703.5px;top:199.1px;font-size:11px;color:#111;">Analyze expressions</div>
<div class="r" style="left:970.5px;top:217.5px;width:841.1px;height:17.5px;background:#90ee90;border-top:1px solid #a0a0a0;border-bottom:1px solid #a0a0a0;box-sizing:border-box;"></div>
<div class="t" style="left:973.0px;top:219.5px;font-size:14px;color:#111;">ViewModel Column in Root ViewModel class - self refers to root object</div>
<svg class="r" style="left:972.5px;top:237.5px" width="18.5" height="18.5" viewBox="0 0 18 18"><circle cx="9" cy="9" r="8.3" fill="#fff" stroke="#222" stroke-width="1.1"/><path d="M5 11 L9 7 L13 11" fill="none" stroke="#111" stroke-width="1.8"/></svg>
<div class="t" style="left:995.5px;top:242.4px;font-size:11.5px;color:#111;">Properties</div>
<div class="t" style="left:976.3px;top:266.9px;font-size:11px;color:#111;">Direction:</div>
<div class="t" style="left:976.3px;top:283.8px;font-size:11px;color:#111;">Visible Expression:</div>
<div class="t" style="left:976.3px;top:300.2px;font-size:11px;color:#111;">Style Expression:</div>
<div class="t" style="left:976.3px;top:317.9px;font-size:11px;color:#111;">Justify Content:</div>
<div class="t" style="left:976.3px;top:335.9px;font-size:11px;color:#111;">Align Items(childs):</div>
<div class="t" style="left:976.3px;top:354.9px;font-size:11px;color:#111;">Wrapping:</div>
<div class="t" style="left:976.3px;top:369.8px;font-size:11px;color:#111;">Additional Settings:</div>
<div class="t" style="left:976.3px;top:402.6px;font-size:11px;color:#111;">Margins:</div>
<div class="r" style="left:1086.5px;top:262.5px;width:169.5px;height:17.8px;border:1px solid #adadad;background:linear-gradient(#f2f2f2,#e5e5e5);box-sizing:border-box;"></div>
<div class="t" style="left:1092.5px;top:266.7px;font-size:11px;">Column</div>
<svg class="r" style="left:1242px;top:268.4px" width="8" height="6"><path d="M1 1.5 L4 4.5 L7 1.5" fill="none" stroke="#444" stroke-width="1.1"/></svg>
<div class="r" style="left:1086.5px;top:281.6px;width:389.0px;height:15.9px;border:1px solid #a8a8a8;background:#fff;box-sizing:border-box;"></div>
<div class="r" style="left:1086.5px;top:298.0px;width:389.0px;height:15.6px;border:1px solid #a8a8a8;background:#fff;box-sizing:border-box;"></div>
<div class="r" style="left:1475.3px;top:281.6px;width:19.2px;height:15.2px;background:linear-gradient(#f0f0f0,#e0e0e0);border:1px solid #9a9a9a;box-sizing:border-box;"></div>
<div class="t" style="left:1480.5px;top:286.3px;font-size:9px;color:#222;">...</div>
<div class="r" style="left:1475.3px;top:298.0px;width:19.2px;height:15.5px;background:linear-gradient(#f0f0f0,#e0e0e0);border:1px solid #9a9a9a;box-sizing:border-box;"></div>
<div class="t" style="left:1480.5px;top:303.0px;font-size:9px;color:#222;">...</div>
<div class="r" style="left:1086.5px;top:314.4px;width:169.5px;height:17.4px;border:1px solid #adadad;background:linear-gradient(#f2f2f2,#e5e5e5);box-sizing:border-box;"></div>
<div class="t" style="left:1092.5px;top:318.4px;font-size:11px;">Start</div>
<svg class="r" style="left:1242px;top:320.1px" width="8" height="6"><path d="M1 1.5 L4 4.5 L7 1.5" fill="none" stroke="#444" stroke-width="1.1"/></svg>
<div class="r" style="left:1086.5px;top:332.4px;width:169.5px;height:18.0px;border:1px solid #adadad;background:linear-gradient(#f2f2f2,#e5e5e5);box-sizing:border-box;"></div>
<div class="t" style="left:1092.5px;top:336.7px;font-size:11px;">NotSet</div>
<svg class="r" style="left:1242px;top:338.4px" width="8" height="6"><path d="M1 1.5 L4 4.5 L7 1.5" fill="none" stroke="#444" stroke-width="1.1"/></svg>
<div class="t" style="left:1261.1px;top:315.1px;font-size:11px;color:#111;">Y-Direction</div>
<div class="t" style="left:1261.1px;top:333.1px;font-size:11px;color:#111;">X-Direction</div>
<div class="r" style="left:1337.2px;top:316.3px;width:13.5px;height:13.5px;border:1px solid #333;background:#fff;box-sizing:border-box;"></div>
<div class="t" style="left:1355.7px;top:315.4px;font-size:11px;color:#111;">Can Scroll(Y-Direction)</div>
<div class="r" style="left:1489.3px;top:316.3px;width:13.5px;height:13.5px;border:1px solid #333;background:#fff;box-sizing:border-box;"></div>
<div class="t" style="left:1508.1px;top:316.0px;font-size:11px;color:#111;">Float in parent</div>
<div class="r" style="left:1599.1px;top:316.4px;width:13.5px;height:13.5px;border:1px solid #333;background:#fff;box-sizing:border-box;"></div>
<div class="t" style="left:1618.4px;top:316.0px;font-size:11px;color:#111;">Hide overflow</div>
<div class="t" style="left:1497.6px;top:297.9px;font-size:11px;color:#111;">Style For Design:</div>
<div class="r" style="left:1585.4px;top:297.4px;width:193.2px;height:16.0px;border:1px solid #a8a8a8;background:#fff;box-sizing:border-box;"></div>
<div class="r" style="left:1782.4px;top:297.4px;width:23.4px;height:16.0px;background:#e1e1e1;border:1px solid #6d6d6d;box-sizing:border-box;"></div>
<div class="t" style="left:1784.5px;top:300.3px;font-size:11px;color:#111;">SIM</div>
<div class="t" style="left:1550.2px;top:266.8px;font-size:11px;color:#111;">Name(optional):</div>
<div class="r" style="left:1636.3px;top:262.3px;width:169.5px;height:18.1px;border:1px solid #3c8ce6;background:#fff;box-sizing:border-box;"></div>
<div class="t" style="left:1639.0px;top:264.8px;font-size:11px;color:#111;">Main</div>
<div class="r" style="left:1586.2px;top:282.0px;width:13.5px;height:13.5px;border:1px solid #333;background:#fff;box-sizing:border-box;"></div>
<div class="t" style="left:1605.2px;top:281.3px;font-size:11px;color:#111;">Hide in Design</div>
<div class="r" style="left:1087.0px;top:353.2px;width:13.5px;height:13.5px;border:1px solid #333;background:#fff;box-sizing:border-box;"></div>
<div class="t" style="left:1106.0px;top:354.2px;font-size:11px;color:#111;">Wrap</div>
<div class="t" style="left:1152.1px;top:354.9px;font-size:11px;color:#111;">Align Content(when wrap):</div>
<div class="r" style="left:1285.3px;top:351.5px;width:169.2px;height:16.8px;border:1px solid #adadad;background:linear-gradient(#f2f2f2,#e5e5e5);box-sizing:border-box;"></div>
<div class="t" style="left:1291.3px;top:355.2px;font-size:11px;">Start</div>
<svg class="r" style="left:1440.5px;top:356.9px" width="8" height="6"><path d="M1 1.5 L4 4.5 L7 1.5" fill="none" stroke="#444" stroke-width="1.1"/></svg>
<div class="t" style="left:1459.6px;top:354.9px;font-size:11px;color:#111;">X-Direction</div>
<div class="r" style="left:1116.2px;top:382.4px;width:29.8px;height:16.8px;border:1px solid #a8a8a8;background:#fff;box-sizing:border-box;"></div>
<div class="r" style="left:1086.5px;top:400.4px;width:29.3px;height:17.0px;border:1px solid #a8a8a8;background:#fff;box-sizing:border-box;"></div>
<div class="r" style="left:1146.3px;top:400.4px;width:29.3px;height:17.0px;border:1px solid #a8a8a8;background:#fff;box-sizing:border-box;"></div>
<div class="r" style="left:1116.2px;top:418.3px;width:29.8px;height:16.9px;border:1px solid #a8a8a8;background:#fff;box-sizing:border-box;"></div>
<div class="t" style="left:1206.4px;top:383.1px;font-size:11px;color:#111;">Primary(Y-Direction) min:</div>
<div class="r" style="left:1332.2px;top:382.4px;width:29.4px;height:16.8px;border:1px solid #a8a8a8;background:#fff;box-sizing:border-box;"></div>
<div class="t" style="left:1365.8px;top:383.1px;font-size:11px;color:#111;">max:</div>
<div class="r" style="left:1392.4px;top:382.4px;width:28.9px;height:16.8px;border:1px solid #a8a8a8;background:#fff;box-sizing:border-box;"></div>
<div class="t" style="left:1425.2px;top:383.1px;font-size:11px;color:#111;">grow(&gt;1 Not applicable on root):</div>
<div class="r" style="left:1582.5px;top:382.4px;width:29.0px;height:16.8px;border:1px solid #a8a8a8;background:#fff;box-sizing:border-box;"></div>
<div class="t" style="left:1206.4px;top:402.6px;font-size:11px;color:#111;">Self-Align(Not applicable on root):</div>
<div class="r" style="left:1370.5px;top:400.4px;width:68.8px;height:16.9px;border:1px solid #adadad;background:linear-gradient(#f2f2f2,#e5e5e5);box-sizing:border-box;"></div>
<div class="t" style="left:1376.5px;top:404.1px;font-size:11px;">NotSet</div>
<svg class="r" style="left:1425.3px;top:405.85px" width="8" height="6"><path d="M1 1.5 L4 4.5 L7 1.5" fill="none" stroke="#444" stroke-width="1.1"/></svg>
<div class="t" style="left:1445.6px;top:402.6px;font-size:11px;color:#111;">Override Parent:</div>
<div class="t" style="left:1536.0px;top:402.6px;font-size:11px;color:#111;">NotSet</div>
<svg class="r" style="left:1050px;top:815px" width="640" height="200"><path d="M6 7 L25.5 7 L25.5 18.5 Z" fill="#f4f4a0"/><path d="M615.5 7 L635 7 L615.5 18.5 Z" fill="#f4f4a0"/><path d="M290 175 L352 175 L321 195 Z" fill="#f4f4a0"/></svg>
<div class="r" style="left:1075.3px;top:573.5px;width:591.2px;height:416.5px;background:#d8d7be;"></div>
<div class="r" style="left:1075.3px;top:573.0px;width:591.2px;height:2.0px;background:#eeee66;"></div>
<div class="r" style="left:1664.8px;top:573.0px;width:2.0px;height:417.0px;background:#e8e870;"></div>
<div class="r" style="left:1075.0px;top:573.0px;width:1.3px;height:103.0px;background:#e8e87a;"></div>
<div class="r" style="left:1245.4px;top:553.5px;width:250.8px;height:20.0px;background:#f4f4a2;"></div>
<div class="r" style="left:1245.4px;top:575.0px;width:250.8px;height:100.0px;background:#e2e07e;"></div>
<div class="r" style="left:1635.8px;top:573.7px;width:30.2px;height:9.3px;background:#90ee70;"></div>
<div class="t" style="left:1637.0px;top:574.5px;font-size:9px;color:#111;">UIFirst</div>
<div class="r" style="left:1075.8px;top:576.3px;width:146.2px;height:38.3px;background:#fff;border:1px solid #c8c8c8;border-bottom:1.5px solid #505050;box-sizing:border-box;"></div>
<div class="t" style="left:1080.5px;top:579.4px;font-size:9.5px;color:#9a9a9a;">Current Car</div>
<svg class="r" style="left:1212px;top:601px" width="10" height="6"><path d="M1 1 H9 L5 5 Z" fill="#555"/></svg>
<div class="r" style="left:1075.8px;top:618.5px;width:146.2px;height:31.2px;background:#fff;border:1px solid #c8c8c8;border-bottom:1.5px solid #505050;box-sizing:border-box;"></div>
<div class="t" style="left:1080.5px;top:621.6px;font-size:9.5px;color:#9a9a9a;">Age (Years)</div>
<div class="r" style="left:1225.9px;top:618.5px;width:96.1px;height:31.2px;background:#fff;border:1px solid #c8c8c8;border-bottom:1.5px solid #505050;box-sizing:border-box;"></div>
<div class="t" style="left:1230.6px;top:621.6px;font-size:9.5px;color:#9a9a9a;">Name</div>
<div class="r" style="left:1227.9px;top:583.0px;width:193.8px;height:31.7px;background:#3465a8;border-radius:3px;box-shadow:0 1px 2px rgba(0,0,0,0.25);"></div>
<div class="t" style="left:1227.9px;top:592.8px;width:193.79999999999995px;text-align:center;font-size:14.2px;color:#fff;-webkit-text-stroke:0.1px #fff">Add A Car I Used To Own</div>
<div class="r" style="left:1428.0px;top:583.0px;width:144.0px;height:31.7px;background:#3465a8;border-radius:3px;box-shadow:0 1px 2px rgba(0,0,0,0.25);"></div>
<div class="t" style="left:1428px;top:592.8px;width:144px;text-align:center;font-size:14.2px;color:#fff;-webkit-text-stroke:0.1px #fff">Delete Me</div>
<div class="r" style="left:1328.3px;top:618.2px;width:193.7px;height:31.8px;background:#3465a8;border-radius:3px;box-shadow:0 1px 2px rgba(0,0,0,0.25);"></div>
<div class="t" style="left:1328.3px;top:628.1px;width:193.70000000000005px;text-align:center;font-size:14.2px;color:#fff;-webkit-text-stroke:0.1px #fff">Save</div>
<div class="t" style="left:1086.0px;top:654.0px;font-size:16.2px;color:#111;">Historic Ownership</div>
<div class="r" style="left:1075.0px;top:674.8px;width:589.0px;height:315.2px;background:#fff;border:1px solid #a8a8a8;border-radius:4px 4px 0 0;box-sizing:border-box;"></div>
<div class="r" style="left:1076.5px;top:700.0px;width:586.5px;height:1.2px;background:#c0c0c0;"></div>
<div class="t" style="left:1080.5px;top:676.8px;width:26px;overflow:hidden;font-size:10.5px;color:#333">Date</div>
<div class="t" style="left:1080.5px;top:688.5px;width:26px;overflow:hidden;font-size:10.5px;color:#333">Purchased</div>
<div class="t" style="left:1125.8px;top:676.8px;width:26px;overflow:hidden;font-size:10.5px;color:#333">Date</div>
<div class="t" style="left:1125.8px;top:688.5px;width:26px;overflow:hidden;font-size:10.5px;color:#333">Sold</div>
<div class="t" style="left:1170.7px;top:676.8px;width:26px;overflow:hidden;font-size:10.5px;color:#333">Regis</div>
<div class="t" style="left:1170.7px;top:688.5px;width:26px;overflow:hidden;font-size:10.5px;color:#333">Number</div>
<svg class="r" style="left:1108px;top:683px" width="9" height="9"><path d="M0.5 0.5 H8.5 L5.5 4 V8.5 L3.5 7 V4 Z" fill="#e6e6e6"/></svg>
<svg class="r" style="left:1151px;top:683px" width="9" height="9"><path d="M0.5 0.5 H8.5 L5.5 4 V8.5 L3.5 7 V4 Z" fill="#e6e6e6"/></svg>
<svg class="r" style="left:1198px;top:683px" width="9" height="9"><path d="M0.5 0.5 H8.5 L5.5 4 V8.5 L3.5 7 V4 Z" fill="#e6e6e6"/></svg>
<svg class="r" style="left:1637px;top:680px" width="22" height="7"><circle cx="3.5" cy="3.5" r="2.5" fill="#3162ae"/><circle cx="10.5" cy="3.5" r="2.5" fill="#3162ae"/><circle cx="17.5" cy="3.5" r="2.5" fill="#3162ae"/></svg>
<svg class="r" style="left:1658px;top:983px" width="8" height="8"><path d="M7 1 V7 H1 Z" fill="none" stroke="#999" stroke-width="0.8" stroke-dasharray="1 1"/></svg>
<div class="r" style="left:970.8px;top:1030.6px;width:14.0px;height:14.0px;border:1px solid #333;background:#fff;box-sizing:border-box;"></div>
<div class="t" style="left:990.0px;top:1030.4px;font-size:11px;color:#111;">Show tab-order</div>
<div class="r" style="left:1068.0px;top:1026.4px;width:16.2px;height:22.3px;background:#dcdcdc;border:1px solid #777;box-sizing:border-box;"></div>
<div class="t" style="left:1069.5px;top:1032.3px;font-size:11px;color:#111;">Fit</div>
<div class="t" style="left:1094.2px;top:1032.3px;font-size:11px;color:#111;">Width:</div>
<div class="r" style="left:1134.0px;top:1036.0px;width:89.0px;height:3.0px;background:#e4e4e4;border:1px solid #d0d0d0;box-sizing:border-box;"></div>
<div class="r" style="left:1134.3px;top:1028.0px;width:12.0px;height:18.0px;background:#eaeaea;border:1px solid #aaa;box-sizing:border-box;"></div>
<div class="t" style="left:1238.4px;top:1032.3px;font-size:11px;color:#111;">Height:</div>
<div class="r" style="left:1281.0px;top:1036.0px;width:90.0px;height:3.0px;background:#e4e4e4;border:1px solid #d0d0d0;box-sizing:border-box;"></div>
<div class="r" style="left:1281.0px;top:1028.0px;width:12.0px;height:18.0px;background:#eaeaea;border:1px solid #aaa;box-sizing:border-box;"></div>
<div class="t" style="left:1386.1px;top:1032.3px;font-size:11px;color:#111;">x:591 y:418</div>
<div class="t" style="left:970.0px;top:1055.3px;font-size:8px;color:#111;">Screen size marker</div>
<div class="r" style="left:1039.0px;top:1051.0px;width:18.6px;height:12.5px;border:1px solid #bbb;background:#fff;box-sizing:border-box;"></div>
<div class="t" style="left:1041.5px;top:1054.8px;font-size:8px;color:#111;">758</div>
<div class="t" style="left:1057.8px;top:1055.3px;font-size:8px;color:#111;">X</div>
<div class="r" style="left:1063.0px;top:1051.0px;width:19.6px;height:12.5px;border:1px solid #bbb;background:#fff;box-sizing:border-box;"></div>
<div class="t" style="left:1065.5px;top:1054.8px;font-size:8px;color:#111;">600</div>
<div class="t" style="left:1083.5px;top:1055.4px;font-size:7.9px;color:#111;">SuggestedZoom</div>
<div class="r" style="left:1142.4px;top:1051.0px;width:28.9px;height:12.5px;border:1px solid #bbb;background:#fff;box-sizing:border-box;"></div>
<div class="r" style="left:1172.1px;top:1049.9px;width:77.9px;height:16.2px;background:#e1e1e1;border:1px solid #777;box-sizing:border-box;"></div>
<div class="t" style="left:1173.5px;top:1055.8px;font-size:7.5px;color:#111;">Set shrink zoom to fit</div>
<div class="r" style="left:1260.0px;top:1050.0px;width:148.5px;height:16.0px;background:#e1e1e1;border:1px solid #777;box-sizing:border-box;"></div>
<div class="t" style="left:1262.0px;top:1052.8px;font-size:11px;color:#111;">WebApp Prototype Edit-Mode</div>
<div class="r" style="left:1775.3px;top:538.2px;width:34.7px;height:34.9px;background:#dcdcdc;border-bottom:1px solid #c4c4c4;box-sizing:border-box;"></div>
<div class="r" style="left:1775.3px;top:573.1px;width:34.7px;height:34.9px;background:#dcdcdc;border-bottom:1px solid #c4c4c4;box-sizing:border-box;"></div>
<div class="r" style="left:1775.3px;top:608.0px;width:34.7px;height:34.9px;background:#dcdcdc;border-bottom:1px solid #c4c4c4;box-sizing:border-box;"></div>
<div class="r" style="left:1775.3px;top:642.9px;width:34.7px;height:34.9px;background:#dcdcdc;border-bottom:1px solid #c4c4c4;box-sizing:border-box;"></div>
<div class="r" style="left:1775.3px;top:677.8px;width:34.7px;height:34.9px;background:#dcdcdc;border-bottom:1px solid #c4c4c4;box-sizing:border-box;"></div>
<div class="r" style="left:1775.3px;top:712.7px;width:34.7px;height:34.9px;background:#dcdcdc;border-bottom:1px solid #c4c4c4;box-sizing:border-box;"></div>
<div class="r" style="left:1775.3px;top:747.6px;width:34.7px;height:34.9px;background:#dcdcdc;border-bottom:1px solid #c4c4c4;box-sizing:border-box;"></div>
<div class="r" style="left:1775.3px;top:782.5px;width:34.7px;height:34.9px;background:#dcdcdc;border-bottom:1px solid #c4c4c4;box-sizing:border-box;"></div>
<div class="r" style="left:1775.3px;top:817.4px;width:34.7px;height:34.9px;background:#dcdcdc;border-bottom:1px solid #c4c4c4;box-sizing:border-box;"></div>
<div class="r" style="left:1775.3px;top:852.3px;width:34.7px;height:34.9px;background:#dcdcdc;border-bottom:1px solid #c4c4c4;box-sizing:border-box;"></div>
<div class="r" style="left:1775.3px;top:538.2px;width:1.0px;height:348.8px;background:#d0d0d0;"></div>
<svg class="r" style="left:1780.5px;top:543.7px" width="24" height="24" viewBox="0 0 24 24"><path d="M14 6.5 H5 V18.5 H17 V11" fill="none" stroke="#1a1a1a" stroke-width="1.8"/><path d="M9.5 15 L18.5 6" stroke="#1a1a1a" stroke-width="3.2"/><path d="M8 16.8 L8.6 13.8 L11 16.2 Z" fill="#1a1a1a"/><circle cx="19" cy="5.5" r="1.9" fill="#1a1a1a"/></svg>
<svg class="r" style="left:1780.5px;top:578.6px" width="24" height="24" viewBox="0 0 24 24"><path d="M4 4 H20 V9 H18.5 Q18 6 15.5 6 H13.5 V18.5 H16 V20 H8 V18.5 H10.5 V6 H8.5 Q6 6 5.5 9 H4 Z" fill="#1a1a1a"/></svg>
<svg class="r" style="left:1780.5px;top:613.5px" width="24" height="24" viewBox="0 0 24 24"><rect x="6.5" y="8" width="10" height="10" fill="none" stroke="#1a1a1a" stroke-width="1.6"/><path d="M8.5 12 L11 15 L17 7" fill="none" stroke="#1a1a1a" stroke-width="1.8"/></svg>
<svg class="r" style="left:1780.5px;top:648.4px" width="24" height="24" viewBox="0 0 24 24"><rect x="3" y="7" width="12" height="10" fill="none" stroke="#1a1a1a" stroke-width="1.6"/><path d="M3 10.5 H15 M3 14 H11" stroke="#1a1a1a" stroke-width="1.4"/><path d="M18.5 6 V16" stroke="#1a1a1a" stroke-width="1.8"/><path d="M15.5 13.5 L18.5 17.5 L21.5 13.5" fill="none" stroke="#1a1a1a" stroke-width="1.8"/></svg>
<svg class="r" style="left:1780.5px;top:683.3px" width="24" height="24" viewBox="0 0 24 24"><rect x="5" y="7" width="14" height="12" rx="1" fill="none" stroke="#1a1a1a" stroke-width="1.6"/><path d="M5 10.5 H19" stroke="#1a1a1a" stroke-width="1.6"/><path d="M8 5 V8.5 M16 5 V8.5" stroke="#1a1a1a" stroke-width="1.8"/><path d="M7 13 H17 M7 15.8 H17 M9.5 11.5 V18 M12 11.5 V18 M14.5 11.5 V18" stroke="#1a1a1a" stroke-width="0.9"/></svg>
<svg class="r" style="left:1780.5px;top:718.2px" width="24" height="24" viewBox="0 0 24 24"><rect x="5" y="5.5" width="14" height="13" fill="none" stroke="#1a1a1a" stroke-width="1.6"/><path d="M9 9 L10.5 11 L12 8.5 L13.5 11 L15 9 V13 Q12 15 9 13 Z M8 17 Q10 14 12 15.5 Q14 14 16 17 Z" fill="#1a1a1a"/></svg>
<svg class="r" style="left:1780.5px;top:753.1px" width="24" height="24" viewBox="0 0 24 24"><rect x="3.5" y="8" width="17" height="9" rx="2.5" fill="none" stroke="#1a1a1a" stroke-width="1.6"/><text x="12" y="14.6" font-size="6.2" font-family="Liberation Sans" font-weight="bold" text-anchor="middle" fill="#1a1a1a">btn</text></svg>
<svg class="r" style="left:1780.5px;top:788.0px" width="24" height="24" viewBox="0 0 24 24"><rect x="5" y="5" width="14" height="14" fill="none" stroke="#1a1a1a" stroke-width="1.6"/><text x="6.5" y="11" font-size="6" font-family="Liberation Sans" font-weight="bold" fill="#1a1a1a">list</text><path d="M5 13 H19 M5 15.2 H19 M5 17.4 H19" stroke="#1a1a1a" stroke-width="0.9"/></svg>
<svg class="r" style="left:1780.5px;top:822.9px" width="24" height="24" viewBox="0 0 24 24"><path d="M12 5 L18 8.5 V15.5 L12 19 L6 15.5 V8.5 Z" fill="#1a1a1a"/><path d="M6 8.5 L12 12 L18 8.5 M12 12 V19" fill="none" stroke="#777" stroke-width="0.9"/><path d="M4.5 8 Q3 12 4.5 16 M19.5 8 Q21 12 19.5 16" fill="none" stroke="#1a1a1a" stroke-width="1.2"/></svg>
<svg class="r" style="left:1780.5px;top:857.8px" width="24" height="24" viewBox="0 0 24 24"><rect x="3" y="4" width="18" height="17" rx="1.5" fill="#fff" stroke="#1a1a1a" stroke-width="1.4"/><path d="M3 7 H21" stroke="#1a1a1a" stroke-width="1"/><rect x="6" y="9" width="12" height="10" fill="none" stroke="#1a1a1a" stroke-width="1"/><ellipse cx="12" cy="14" rx="3.8" ry="2.3" fill="none" stroke="#1a1a1a" stroke-width="1.2"/><circle cx="12" cy="14" r="1.1" fill="#1a1a1a"/></svg>
<div class="r" style="left:505.5px;top:232.7px;width:30px;height:30px;border-radius:50%;box-sizing:border-box;border:2px solid #0cb0e6;background:rgba(0,151,213,0.75);box-shadow:0 2px 5px rgba(0,0,0,0.32);"></div>
<svg class="r" style="left:505.5px;top:232.7px" width="30" height="30"><path d="M15.6 9.8 V20.8" stroke="#eef" stroke-width="2.3"/><path d="M16.5 9.5 L13.2 11.6" stroke="#eef" stroke-width="1.6"/></svg>
<div class="r" style="left:1442.6px;top:134.8px;width:30px;height:30px;border-radius:50%;box-sizing:border-box;border:2px solid #0cb0e6;background:rgba(0,151,213,0.75);box-shadow:0 2px 5px rgba(0,0,0,0.32);"></div>
<div class="t" style="left:1442.6px;top:141.10000000000002px;width:30px;text-align:center;font-size:15.5px;color:#eef">2</div>
<svg class="r" style="left:0;top:0" width="1919" height="1151"><defs><filter id="sh" x="-20%" y="-20%" width="140%" height="140%"><feDropShadow dx="0" dy="1.5" stdDeviation="1.5" flood-color="#000" flood-opacity="0.3"/></filter></defs><path d="M487 251.8 Q489 253 487 254.4 L304.8 286.1 L307.8 291 L280.2 282.9 L304.2 268.5 L303.6 273.6 Z" fill="#06b0ea" filter="url(#sh)"/><path d="M1485.5 165 Q1485.5 162.5 1487.5 162.8 L1621 243 L1621.5 237.5 L1637 260.8 L1609 257 L1615 253 Z" fill="#06b0ea" filter="url(#sh)"/></svg>
</body></html>
